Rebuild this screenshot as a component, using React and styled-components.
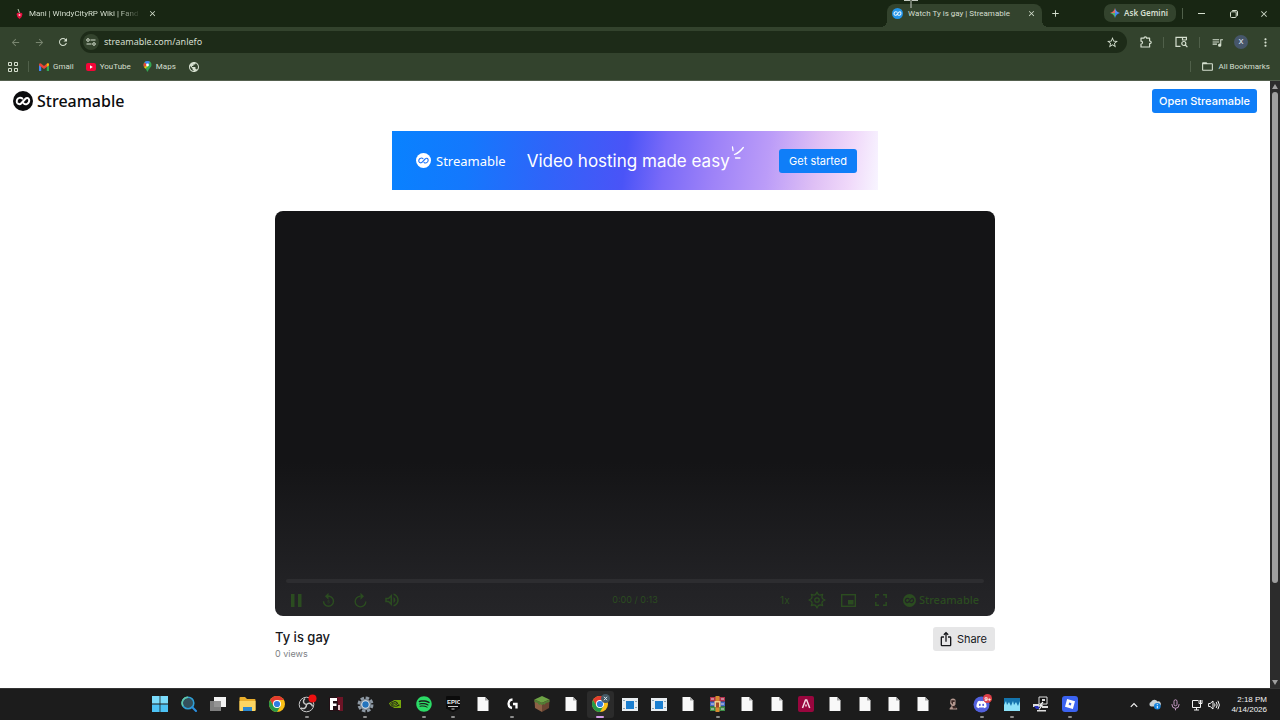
import React from "react";
import styled, { createGlobalStyle, css } from "styled-components";
import {
  MdArrowBack,
  MdArrowForward,
  MdRefresh,
  MdStarBorder,
  MdQueueMusic,
  MdMoreVert,
  MdPublic,
  MdFolderOpen,
  MdClose,
  MdAdd,
  MdReplay5,
  MdOutlineVolumeUp,
  MdIosShare,
} from "react-icons/md";
import { FaDiscord, FaSpotify } from "react-icons/fa";
import { SiNvidia, SiRoblox } from "react-icons/si";

const GlobalStyle = createGlobalStyle`
  *, *::before, *::after { box-sizing: border-box; }
  body { margin: 0; background: #fff; }
  button, input { font: inherit; color: inherit; }
  svg { display: block; flex: none; }
`;

const chromeFont = `Roboto, "Noto Sans", sans-serif`;
const brandFont = `"Noto Sans", "Open Sans", sans-serif`;
const siteFont = `Inter, "Liberation Sans", sans-serif`;

const Screen = styled.div`
  min-height: 100vh;
  display: flex;
  flex-direction: column;
`;

/* ---------- browser chrome ---------- */

const Chrome = styled.header`
  position: relative;
  background: #33432d;
  color: #d5dfcf;
  font-family: ${chromeFont};
  font-size: 8px;
  line-height: 12px;
  border-bottom: 1px solid #53604e;
`;

const TabStrip = styled.div`
  display: flex;
  align-items: stretch;
  height: 27px;
  padding-left: 10px;
  background: #182613;
`;

const Tab = styled.div`
  position: relative;
  display: flex;
  align-items: center;
  gap: 5px;
  width: ${(p) => (p.$active ? 155 : 153)}px;
  height: 23px;
  margin-top: 4px;
  padding: 0 5px 4px;
  border-radius: 8px 8px 0 0;
  ${(p) =>
    p.$active &&
    css`
      background: #33432d;
      &::before,
      &::after {
        content: "";
        position: absolute;
        bottom: 0;
        width: 6px;
        height: 6px;
      }
      &::before {
        right: 100%;
        background: radial-gradient(circle at 0 0, #182613 6px, #33432d 6px);
      }
      &::after {
        left: 100%;
        background: radial-gradient(circle at 100% 0, #182613 6px, #33432d 6px);
      }
    `}
`;

const TabTitle = styled.span`
  flex: 1;
  white-space: nowrap;
  ${(p) =>
    p.$fade &&
    css`
      mask-image: linear-gradient(to right, #000 80%, transparent);
    `}
`;

const IconButton = styled.button`
  display: flex;
  align-items: center;
  justify-content: center;
  flex: none;
  width: ${(p) => p.$w || 12}px;
  height: ${(p) => p.$h || 12}px;
  padding: 0;
  border: 0;
  border-radius: 12px;
  background: ${(p) => p.$bg || "none"};
  color: ${(p) => (p.$dim ? "#78856f" : "inherit")};
`;

const Spacer = styled.div`
  flex: 1;
`;

const TabActions = styled.div`
  display: flex;
  align-items: center;
  padding-left: 7px;
`;

const GeminiButton = styled.button`
  display: flex;
  align-items: center;
  gap: 4px;
  height: 18px;
  margin: 4px 6px 0 43px;
  padding: 0 8px 0 6px;
  border: 0;
  border-radius: 7px;
  background: #33432d;
  font-family: ${brandFont};
  font-weight: 600;
`;

const Divider = styled.span`
  flex: none;
  width: 1px;
  height: 11px;
  background: #50604a;
`;

const WindowControls = styled.div`
  display: flex;
  align-items: center;
`;

const Toolbar = styled.div`
  display: flex;
  align-items: center;
  height: 30px;
  padding: 0 4px 0 3px;
`;

const AddressBar = styled.form`
  flex: 1;
  display: flex;
  align-items: center;
  gap: 5px;
  height: 22px;
  margin: 0 9px 0 5px;
  padding: 0 6px 0 3px;
  border-radius: 11px;
  background: #1d2b18;
`;

const AddressInput = styled.input`
  flex: 1;
  min-width: 0;
  padding: 0;
  border: 0;
  background: none;
  font-family: ${brandFont};
  font-size: 9px;
  outline: none;
`;

const ToolbarIcons = styled.div`
  display: flex;
  align-items: center;
`;

const ToolbarGap = styled.span`
  display: flex;
  justify-content: center;
  width: 14px;
`;

const Avatar = styled.span`
  display: grid;
  place-items: center;
  width: 14px;
  height: 14px;
  border-radius: 50%;
  background: #46566a;
  color: #e4ebf2;
  font-size: 8px;
  line-height: 14px;
`;

const BookmarksBar = styled.nav`
  display: flex;
  align-items: center;
  height: 23px;
  padding: 0 10px 4px 8px;
`;

const BookmarkGroup = styled.div`
  display: flex;
  align-items: center;
  gap: ${(p) => p.$gap}px;
  ${(p) => p.$inset && css`padding-left: 10px;`}
`;

const Bookmark = styled.a`
  display: flex;
  align-items: center;
  gap: 4px;
  color: inherit;
  text-decoration: none;
`;

const Pointer = styled.svg`
  position: absolute;
  top: 0;
  left: 904px;
`;

/* ---------- web page ---------- */

const Viewport = styled.div`
  flex: 1;
  display: flex;
`;

const Page = styled.div`
  flex: 1;
  min-width: 0;
  background: #fff;
  color: #17181c;
  font-family: ${siteFont};
`;

const SiteHeader = styled.div`
  display: flex;
  align-items: center;
  justify-content: space-between;
  height: 40px;
  padding: 0 13px;
`;

const Brand = styled.a`
  display: flex;
  align-items: center;
  gap: ${(p) => p.$gap || 4}px;
  color: ${(p) => p.$color || "#0b0c0e"};
  font-family: ${brandFont};
  font-size: ${(p) => p.$size}px;
  font-weight: ${(p) => p.$weight || 500};
  line-height: 20px;
  text-decoration: none;
`;

const PrimaryButton = styled.button`
  height: 24px;
  padding: 0 ${(p) => p.$pad || 7}px;
  border: 0;
  border-radius: 3px;
  background: #0f7ef8;
  color: #fff;
  font-size: 11px;
  font-weight: ${(p) => p.$weight || 500};
  white-space: nowrap;
`;

const Banner = styled.section`
  display: flex;
  align-items: center;
  width: 486px;
  max-width: 100%;
  height: 59px;
  margin: 10px auto 21px;
  padding: 0 21px 0 24px;
  background: linear-gradient(
    97deg,
    #0882ff 0%,
    #1478fd 16%,
    #2f64f9 32%,
    #4a54f7 48%,
    #7a6af8 56%,
    #9d82f8 66%,
    #bb9cf8 77%,
    #dfc0f5 87%,
    #f0d9fa 94%,
    #f8f5ff 100%
  );
`;

const Slogan = styled.p`
  display: flex;
  align-items: center;
  gap: 1px;
  margin: 0 0 0 21px;
  color: #fff;
  font-size: 17px;
  line-height: 22px;
  white-space: nowrap;
`;

const Sparks = styled.svg`
  margin-bottom: 16px;
`;

const Main = styled.main`
  width: 720px;
  max-width: 100%;
  margin: 0 auto;
`;

const Player = styled.div`
  display: flex;
  flex-direction: column;
  justify-content: flex-end;
  aspect-ratio: 16 / 9;
  padding: 0 11px 1px;
  border-radius: 8px;
  background: linear-gradient(#141416 0%, #141416 62%, #222225 92%, #252528 100%);
  color: #2b4c20;
`;

const Seek = styled.input`
  appearance: none;
  display: block;
  width: 100%;
  height: 4px;
  margin: 0;
  border-radius: 2px;
  background: #2d2d30;
  &::-webkit-slider-thumb {
    appearance: none;
    width: 0;
    height: 0;
  }
`;

const Controls = styled.div`
  display: grid;
  grid-template-columns: 1fr auto 1fr;
  align-items: center;
  height: 30px;
  margin-top: 2px;
`;

const ControlGroup = styled.div`
  display: flex;
  align-items: center;
  justify-content: ${(p) => (p.$end ? "flex-end" : "flex-start")};
  gap: 12px;
  padding-right: ${(p) => (p.$end ? 5 : 0)}px;
`;

const ControlButton = styled(IconButton)`
  width: 20px;
  height: 20px;
  font-size: 10px;
`;

const Time = styled.span`
  font-size: 9px;
  line-height: 12px;
`;

const Details = styled.div`
  display: flex;
  align-items: flex-start;
  justify-content: space-between;
  padding-top: 11px;
`;

const Title = styled.h1`
  margin: 0;
  font-size: 13px;
  font-weight: 500;
  line-height: 20px;
`;

const Views = styled.p`
  margin: 0;
  color: #7d7f84;
  font-size: 9px;
  line-height: 14px;
`;

const ShareButton = styled.button`
  display: flex;
  align-items: center;
  gap: 3px;
  height: 24px;
  padding: 0 8px 0 5px;
  border: 0;
  border-radius: 3px;
  background: #e6e6e7;
  font-size: 11px;
  font-weight: 400;
`;

const Scrollbar = styled.div`
  flex: none;
  display: flex;
  flex-direction: column;
  align-items: center;
  gap: 3px;
  width: 10px;
  padding: 3px 0;
  background: #2c2c2c;
  color: #9f9f9f;
`;

const Track = styled.div`
  flex: 1;
  width: 6px;
`;

const Thumb = styled.div`
  height: 84%;
  border-radius: 3px;
  background: #9f9f9f;
`;

/* ---------- taskbar ---------- */

const Taskbar = styled.footer`
  display: flex;
  height: 32px;
  padding-left: 145px;
  background: #1c1c1c;
  border-top: 1px solid #343434;
  color: #f2f2f2;
`;

const Apps = styled.div`
  flex: 1;
  display: grid;
  grid-auto-flow: column;
  grid-auto-columns: minmax(0, 1fr);
`;

const TaskButton = styled.button`
  position: relative;
  display: grid;
  place-items: center;
  margin: 2px 1px;
  padding: 0 0 1px;
  border: 0;
  border-radius: 3px;
  background: ${(p) => (p.$current ? "#2b2b2b" : "none")};
  &::after {
    content: "";
    position: absolute;
    bottom: 0;
    left: 50%;
    width: ${(p) => (p.$current ? 8 : 4)}px;
    height: 2px;
    border-radius: 1px;
    transform: translateX(-50%);
    background: ${(p) => (p.$current ? "#d29be6" : p.$open ? "#8d8d8d" : "transparent")};
  }
`;

const Tray = styled.div`
  flex: none;
  display: flex;
  align-items: center;
  width: 195px;
  padding-right: 13px;
`;

const TrayIcons = styled.div`
  flex: 1;
  display: grid;
  grid-template-columns: 21px 21px 21px 21px 14px;
  align-items: center;
  justify-items: center;
  justify-content: start;
  padding-left: 38px;
`;

const Clock = styled.time`
  font-family: "Liberation Sans", sans-serif;
  font-size: 8px;
  line-height: 10px;
  text-align: right;
`;

/* ---------- drawings ---------- */

const StreamableMark = ({ size, fill, ink, thin }) => (
  <svg width={size} height={size} viewBox="0 0 20 20" aria-hidden="true">
    <circle cx="10" cy="10" r="10" fill={fill} />
    <path
      d="M9.300 7.600C8.400 6.800 7.300 6.500 6.200 6.900 4.300 7.500 3.300 9.500 3.900 11.300 4.600 13.200 6.900 13.800 8.300 12.300L12.200 8C13.400 6.600 15.300 6.500 16 8.300 16.700 10.200 15.700 12.500 13.800 13.100 12.700 13.500 11.500 13.200 10.700 12.400"
      fill="none"
      stroke={ink}
      strokeWidth={thin ? 1.5 : 2}
      strokeLinecap="round"
      strokeLinejoin="round"
    />
  </svg>
);

const ChromeLogo = ({ badge }) => (
  <svg width="20" height="20" viewBox="0 0 20 20">
    <circle cx="10" cy="10" r="8" fill="#fbc016" />
    <path d="M3.070 6A8 8 0 0 1 16.930 6L10 6 6.500 12Z" fill="#e33b2e" />
    <path d="M3.070 6A8 8 0 0 0 10 18L13.500 12 6.500 12Z" fill="#279847" />
    <circle cx="10" cy="10" r="4" fill="#fff" />
    <circle cx="10" cy="10" r="3.100" fill="#2f7de1" />
    {badge && (
      <g>
        <circle cx="15.500" cy="4.500" r="4.500" fill="#465a66" />
        <path d="M14 2.800 17 6.200M17 2.800 14 6.200" stroke="#dce6ec" strokeWidth="1" />
      </g>
    )}
  </svg>
);

const WindowsLogo = () => (
  <svg width="16" height="16" viewBox="0 0 16 16" fill="#4cc2f4">
    <path d="M0 0h7.600v7.600H0zM8.400 0H16v7.600H8.400z" fill="#7bdcfb" />
    <path d="M0 8.400h7.600V16H0zM8.400 8.400H16V16H8.400z" />
  </svg>
);

const SearchLogo = () => (
  <svg width="16" height="16" viewBox="0 0 16 16" fill="none">
    <circle cx="7" cy="7" r="5.800" fill="#34505c" stroke="#2f9fd6" strokeWidth="1.600" />
    <path d="M2 10A5.800 5.800 0 0 1 7 1.200" stroke="#62c8a8" strokeWidth="1.600" />
    <path d="M11.300 11.300 15 15" stroke="#2a8fe0" strokeWidth="2" strokeLinecap="round" />
  </svg>
);

const TaskViewLogo = () => (
  <svg width="18" height="16" viewBox="0 0 18 16">
    <rect x="5" y="1" width="12" height="10" fill="#f2f2f2" />
    <rect x="1" y="5" width="11" height="10" fill="#8b8b8b" fillOpacity=".9" />
  </svg>
);

const FolderLogo = () => (
  <svg width="17" height="16" viewBox="0 0 17 16">
    <path d="M.5 2A1 1 0 0 1 1.500 1H6l2 2h7.500a1 1 0 0 1 1 1v10a1 1 0 0 1-1 1h-14a1 1 0 0 1-1-1z" fill="#e9ae2c" />
    <path d="M.5 5h16v9a1 1 0 0 1-1 1h-14a1 1 0 0 1-1-1z" fill="#fbd562" />
    <path d="M4 11h9v4H4z" fill="#2a87cf" />
  </svg>
);

const ObsLogo = () => (
  <svg width="20" height="20" viewBox="0 0 20 20" fill="none">
    <circle cx="9.500" cy="10.500" r="7.300" fill="#202022" stroke="#c9c9c9" />
    <path d="M9.500 10.500C6 10 5.500 6.500 8 4.500M9.500 10.500C12 8 15 9.500 15.500 12.500M9.500 10.500C9.500 14 7 15.500 4 14" stroke="#c9c9c9" strokeWidth="1.500" />
    <circle cx="15.500" cy="4.500" r="4" fill="#ee1010" />
  </svg>
);

const FLogo = () => (
  <svg width="16" height="16" viewBox="0 0 16 16">
    <path d="M1 1h14v14H1z" fill="#241016" />
    <path d="M9 1h6v14h-4z" fill="#6d1426" />
    <path d="M2 2h7v3H5v2.500h3.500v2.500H5V14H2z" fill="#fff" />
    <path d="M10 9h2v5h-2z" fill="#e9c4cb" />
  </svg>
);

const GearLogo = () => (
  <svg width="17" height="17" viewBox="0 0 17 17">
    <circle cx="8.500" cy="8.500" r="6.600" fill="none" stroke="#8f9aa5" strokeWidth="2.800" strokeDasharray="3.500 1.680" />
    <circle cx="8.500" cy="8.500" r="5" fill="#dfe5ea" stroke="#7c8792" strokeWidth="1.500" />
    <circle cx="8.500" cy="8.500" r="3.200" fill="#2474bd" />
  </svg>
);

const EpicLogo = () => (
  <svg width="14" height="16" viewBox="0 0 14 16">
    <path d="M0 1a1 1 0 0 1 1-1h12a1 1 0 0 1 1 1v11.500L7 16 0 12.500z" fill="#0b0b0b" />
    <text x="1" y="8" fontSize="6" fontWeight="700" fontFamily="Liberation Sans, sans-serif" fill="#eee">EPIC</text>
    <path d="M2 10.500h10M5.500 13h3" stroke="#ccc" />
  </svg>
);

const FileLogo = () => (
  <svg width="12" height="16" viewBox="0 0 12 16">
    <path d="M.5 1h7.500L11.500 4.500V15H.5z" fill="#f8f8f8" />
    <path d="M8 1v3.500h3.500z" fill="#a9a9a9" />
  </svg>
);

const LogitechLogo = () => (
  <svg width="14" height="14" viewBox="0 0 14 14" fill="none" stroke="#fff" strokeWidth="2.300">
    <path d="M7.500 2.500A4.300 4.300 0 0 0 7 11M8 7h3.500v4.500" />
  </svg>
);

const BlockLogo = () => (
  <svg width="16" height="16" viewBox="0 0 16 16">
    <path d="M8 0 15.500 3.500 8 7 .5 3.500z" fill="#6da345" />
    <path d="M.5 3.500 8 7v9L1 12z" fill="#8d6146" />
    <path d="M15.500 3.500 8 7v9l7-4z" fill="#6a4532" />
    <path d="M.5 3.500 8 7v2L6 8v1L4 8V7L.5 6zM15.500 3.500 8 7v2l2-1v1l2-2 3.500-1z" fill="#527f35" />
  </svg>
);

const WindowLogo = () => (
  <svg width="16" height="13" viewBox="0 0 16 13">
    <path d="M0 0h16v13H0z" fill="#e9eef1" />
    <path d="M1 2h2v1H1zM13 3h2v1h-2zM1 10h2v1H1zM13 9h2v1h-2z" fill="#8ba3b1" />
    <path d="M4 3h8v8H4z" fill="#1b7fd0" />
  </svg>
);

const ArchiveLogo = () => (
  <svg width="17" height="16" viewBox="0 0 17 16">
    <path d="M1 1h15v4.600H1z" fill="#b3324d" />
    <path d="M1 5.600h15v4.800H1z" fill="#4369c6" />
    <path d="M1 10.400h15V15H1z" fill="#3e8f46" />
    <path d="M6.500 0h4v16h-4z" fill="#d68a30" />
    <path d="M5.500 5h6v6h-6z" fill="#f0cf88" />
    <path d="M7 6.500h3v5H7z" fill="#a4482a" />
    <path d="M2 3h3M12 3h3M2 8h3M12 8h3M2 13h3M12 13h3" stroke="#e2d6e0" />
  </svg>
);

const RedALogo = () => (
  <svg width="16" height="16" viewBox="0 0 16 16">
    <rect width="16" height="16" rx="2" fill="#99063e" />
    <path d="M4.500 12 7.500 4h1.200l3 8M8 8.500v2" fill="none" stroke="#f4dbe5" strokeWidth="1.500" />
  </svg>
);

const BustLogo = () => (
  <svg width="10" height="14" viewBox="0 0 12 15">
    <path d="M3 2.500Q6-.5 9 2.500V8L7.500 10 11 13v1H2v-1.500L4.500 10 2.500 7z" fill="#b3978e" />
    <path d="M4 3h4v2H6v3L4 6zM5 10h4l1 3H6z" fill="#3b2724" />
  </svg>
);

const Discord = () => (
  <svg width="20" height="20" viewBox="0 0 20 20">
    <circle cx="9.500" cy="10.500" r="8" fill="#5260dd" />
    <FaDiscord x="4" y="5" size="11" color="#fff" />
    <circle cx="15.500" cy="4.500" r="4.500" fill="#dc3f49" />
    <text x="12.500" y="7" fontSize="6" fontWeight="700" fontFamily="Liberation Sans, sans-serif" fill="#fff">9+</text>
  </svg>
);

const MonitorLogo = () => (
  <svg width="16" height="13" viewBox="0 0 16 13">
    <path d="M0 0h16v13H0z" fill="#1474ad" />
    <path d="M0 13V7l2-4 1 4 2-3 2 4 2-5 1 4 2-3 2 4 2-5v10z" fill="#8ce2f9" />
  </svg>
);

const PuttyLogo = () => (
  <svg width="16" height="16" viewBox="0 0 16 16">
    <path d="M6 1h8v7H6z" fill="#111" stroke="#ddd" />
    <path d="M9 3h3v2H9z" fill="#ddd" />
    <path d="M0 8h6v3H0zM9 10h6v2H9zM4 14h9v1.500H4z" fill="#ddd" />
    <path d="M1 10h5v3H3z" fill="#2630b8" />
    <path d="M10 6 6.500 10l2.500-.5L6 13.500" fill="none" stroke="#f2f2f2" strokeWidth="1.200" />
  </svg>
);

const Roblox = () => (
  <svg width="16" height="16" viewBox="0 0 16 16">
    <rect width="16" height="16" rx="3" fill="#3b63f1" />
    <SiRoblox x="3" y="3" size="10" color="#fff" />
  </svg>
);

const Gmail = () => (
  <svg width="10" height="8" viewBox="0 0 10 8">
    <path d="M0 1.500V8h2.200V3z" fill="#4285f4" />
    <path d="M10 1.500V8H7.800V3z" fill="#34a853" />
    <path d="M0 1.200Q.6-.3 2 .6L5 3 8 .6Q9.400-.3 10 1.200L9.800 2.400 5 6 .2 2.400z" fill="#ea4335" />
    <path d="M7.800.8Q9.400-.3 10 1.200V2.200L7.800 3.800z" fill="#fbbc04" />
  </svg>
);

const YouTube = () => (
  <svg width="10" height="8" viewBox="0 0 10 8">
    <rect width="10" height="8" rx="2" fill="#f50537" />
    <path d="M4 2.300 6.800 4 4 5.700z" fill="#fff" />
  </svg>
);

const MapsPin = () => (
  <svg width="9" height="11" viewBox="0 0 8 11">
    <path d="M4 0a4 4 0 0 1 4 4C8 6.500 5 7.500 4.500 10.500h-1C3 7.500 0 6.500 0 4a4 4 0 0 1 4-4" fill="#34a853" />
    <path d="M4 0A4 4 0 0 0 1 1.400L4 4 6.500.9A4 4 0 0 0 4 0" fill="#4285f4" />
    <path d="M1 1.400A4 4 0 0 0 .5 6L4 4z" fill="#ea4335" />
    <path d="M.5 6 1.800 7.700 5 4z" fill="#fbbc04" />
    <circle cx="4" cy="4" r="1.400" fill="#fff" />
  </svg>
);

const Sparkle = () => (
  <svg width="10" height="10" viewBox="0 0 10 10">
    <path d="M5 0Q6 4 10 5H5z" fill="#5d8df4" />
    <path d="M5 0Q4 4 0 5h5z" fill="#e56b5d" />
    <path d="M0 5q4 1 5 5V5z" fill="#58b56c" />
    <path d="M10 5Q6 6 5 10V5z" fill="#3d86f5" />
  </svg>
);

const Cherry = () => (
  <svg width="9" height="10" viewBox="0 0 9 10">
    <path d="M3 0 4.500 4" stroke="#b9cbb0" />
    <path d="M1.500 5Q2.500 3 4.500 4 6.500 3 7.500 5 7.500 7.500 4.500 10 1.500 7.500 1.500 5" fill="#e51240" />
    <circle cx="4.500" cy="6" r="1" fill="#ffc4cf" />
  </svg>
);

const Grid4 = () => (
  <svg width="10" height="10" viewBox="0 0 10 10" fill="none" stroke="currentColor">
    <path d="M.5.500h3v3h-3zM6.500.500h3v3h-3zM.5 6.500h3v3h-3zM6.500 6.500h3v3h-3z" />
  </svg>
);

const SiteInfo = () => (
  <svg width="10" height="8" viewBox="0 0 10 8" fill="none" stroke="currentColor">
    <path d="M4.500 2H9.500M.5 6H5.500" />
    <circle cx="2" cy="2" r="1.300" />
    <circle cx="8" cy="6" r="1.300" />
  </svg>
);

const Puzzle = () => (
  <svg width="12" height="12" viewBox="0 0 12 12" fill="none" stroke="currentColor" strokeWidth="1.200" strokeLinejoin="round">
    <path d="M1 2.200H4Q4 .8 5.300.8T6.600 2.200H9.600V5Q11.200 5 11.200 6.300T9.600 7.600V11H1V8Q2.500 8 2.500 6.600T1 5.200Z" />
  </svg>
);

const LensSearch = () => (
  <svg width="13" height="12" viewBox="0 0 13 12" fill="none" stroke="currentColor" strokeWidth="1.200">
    <path d="M5.500 10.400H1V1.400H11.400V4M7.500 1.400V4H11.500" />
    <circle cx="8.800" cy="7.500" r="2" />
    <path d="M10.300 9 12.400 11.200" />
  </svg>
);

const Restore = () => (
  <svg width="8" height="8" viewBox="0 0 8 8" fill="none" stroke="currentColor">
    <rect x=".5" y="1.800" width="5.700" height="5.700" rx="1" />
    <path d="M2.200.5H6A1.500 1.500 0 0 1 7.500 2v3.800" />
  </svg>
);

const Minimise = () => (
  <svg width="7" height="2" viewBox="0 0 7 2">
    <path d="M0 .5h7" stroke="currentColor" />
  </svg>
);

const PauseBars = () => (
  <svg width="12" height="13" viewBox="0 0 12 13" fill="currentColor">
    <path d="M1 0h3.500v13H1zM8 0h3.500v13H8z" />
  </svg>
);

/* Eight pointed teeth round a small hub. */
const gearPoints = Array.from({ length: 32 }, (_, i) => {
  const radius = [8, 5.8, 5.6, 5.8][i % 4];
  const angle = ((i % 4 === 1 ? i + 0.1 : i % 4 === 3 ? i - 0.1 : i) * Math.PI) / 16;
  return `${(9 + radius * Math.sin(angle)).toFixed(2)},${(9 - radius * Math.cos(angle)).toFixed(2)}`;
}).join(" ");

const SpikyGear = () => (
  <svg width="18" height="18" viewBox="0 0 18 18" fill="none" stroke="currentColor" strokeWidth="1.300" strokeLinejoin="round">
    <polygon points={gearPoints} />
    <circle cx="9" cy="9" r="2.200" />
  </svg>
);

const MiniPlayer = () => (
  <svg width="15" height="13" viewBox="0 0 15 13" fill="none" stroke="currentColor" strokeWidth="1.400">
    <rect x=".7" y=".7" width="13.600" height="11.600" />
    <rect x="7" y="6" width="5.500" height="4.500" fill="currentColor" stroke="none" />
  </svg>
);

const Corners = () => (
  <svg width="12" height="12" viewBox="0 0 12 12" fill="none" stroke="currentColor" strokeWidth="1.500">
    <path d="M.8 4V.8H4M8 .8h3.200V4M11.200 8v3.200H8M4 11.200H.8V8" />
  </svg>
);

const Forward = () => (
  <svg width="17" height="17" viewBox="0 0 24 24" fill="none" stroke="currentColor" strokeWidth="2">
    <path d="M12 6a7.500 7.500 0 1 0 7.500 7.500" />
    <path d="M12 1 17 6l-5 5z" fill="currentColor" stroke="none" />
  </svg>
);

const Triangle = ({ down }) => (
  <svg width="6" height="5" viewBox="0 0 6 5" fill="currentColor">
    <path d={down ? "M0 0h6L3 5z" : "M0 5h6L3 0z"} />
  </svg>
);

const Chevron = () => (
  <svg width="8" height="6" viewBox="0 0 8 6" fill="none" stroke="currentColor" strokeWidth="1.200">
    <path d="M.8 4.800 4 1.500l3.200 3.300" />
  </svg>
);

const Cloud = () => (
  <svg width="12" height="11" viewBox="0 0 12 11">
    <path d="M2 7.500A2.400 2.400 0 0 1 2 3 3.600 3.600 0 0 1 8.500 2.500 2.500 2.500 0 0 1 10 7.500z" fill="#c9d1d6" />
    <circle cx="8.300" cy="7.300" r="3.300" fill="#1684df" />
    <path d="M8.300 5.200v1M8.300 7v2.300" stroke="#fff" />
  </svg>
);

const Mic = () => (
  <svg width="9" height="12" viewBox="0 0 9 12" fill="none" stroke="#c69ac4">
    <rect x="3" y=".8" width="3" height="6" rx="1.500" />
    <path d="M1 5v.8a3.500 3.500 0 0 0 7 0V5M4.500 9.300v2" />
  </svg>
);

const Network = () => (
  <svg width="12" height="12" viewBox="0 0 12 12" fill="none" stroke="currentColor">
    <path d="M7 1.500H1.500v7h8V6M3 11h5M5.500 8.500V11M9.500 4.500V6" />
    <path d="M8 1v3.500h3V1M9.500 1v3" />
  </svg>
);

const Speaker = () => (
  <svg width="12" height="10" viewBox="0 0 12 10" fill="none" stroke="currentColor">
    <path d="M.6 3.500h1.600L5 1v8L2.200 6.500H.6z" />
    <path d="M6.500 3.500q1 1.500 0 3M8.200 2q2 3 0 6M9.900.8q3 4.200 0 8.400" />
  </svg>
);

const apps = [
  { name: "Start", icon: <WindowsLogo /> },
  { name: "Search", icon: <SearchLogo /> },
  { name: "Task view", icon: <TaskViewLogo /> },
  { name: "File Explorer", icon: <FolderLogo /> },
  { name: "Chrome", icon: <ChromeLogo /> },
  { name: "OBS Studio", icon: <ObsLogo />, open: true },
  { name: "FiveM", icon: <FLogo /> },
  { name: "Settings", icon: <GearLogo />, open: true },
  { name: "Nvidia", icon: <SiNvidia size={12} color="#76a80c" /> },
  { name: "Spotify", icon: <FaSpotify size={16} color="#2bdb66" />, open: true },
  { name: "Epic Games", icon: <EpicLogo />, open: true },
  { name: "File 1", icon: <FileLogo /> },
  { name: "G Hub", icon: <LogitechLogo />, open: true },
  { name: "Minecraft", icon: <BlockLogo /> },
  { name: "File 2", icon: <FileLogo /> },
  { name: "Chrome profile X", icon: <ChromeLogo badge />, current: true },
  { name: "Window 1", icon: <WindowLogo /> },
  { name: "Window 2", icon: <WindowLogo /> },
  { name: "File 3", icon: <FileLogo /> },
  { name: "WinRAR", icon: <ArchiveLogo />, open: true },
  { name: "File 4", icon: <FileLogo /> },
  { name: "File 5", icon: <FileLogo /> },
  { name: "A", icon: <RedALogo /> },
  { name: "File 6", icon: <FileLogo /> },
  { name: "File 7", icon: <FileLogo /> },
  { name: "File 8", icon: <FileLogo /> },
  { name: "File 9", icon: <FileLogo /> },
  { name: "Game", icon: <BustLogo /> },
  { name: "Discord", icon: <Discord />, open: true },
  { name: "Monitor", icon: <MonitorLogo />, open: true },
  { name: "Terminal", icon: <PuttyLogo /> },
  { name: "Roblox", icon: <Roblox />, open: true },
];

export default function App() {
  return (
    <Screen>
      <GlobalStyle />
      <Chrome>
        <TabStrip>
          <Tab>
            <Cherry />
            <TabTitle $fade>Mani | WindyCityRP Wiki | Fand</TabTitle>
            <IconButton aria-label="Close tab"><MdClose size={9} /></IconButton>
          </Tab>
          <Spacer />
          <Tab $active>
            <StreamableMark size={11} fill="#2394e8" ink="#e4f4ff" />
            <TabTitle>Watch Ty is gay | Streamable</TabTitle>
            <IconButton aria-label="Close tab"><MdClose size={9} /></IconButton>
          </Tab>
          <TabActions>
            <IconButton aria-label="New tab"><MdAdd size={11} /></IconButton>
          </TabActions>
          <GeminiButton><Sparkle />Ask Gemini</GeminiButton>
          <WindowControls>
            <Divider />
            <IconButton $w={37} aria-label="Minimize"><Minimise /></IconButton>
            <IconButton $w={28} aria-label="Restore"><Restore /></IconButton>
            <IconButton $w={32} aria-label="Close"><MdClose size={10} /></IconButton>
          </WindowControls>
        </TabStrip>
        <Toolbar>
          <IconButton $w={24} $dim aria-label="Back"><MdArrowBack size={11} /></IconButton>
          <IconButton $w={24} $dim aria-label="Forward"><MdArrowForward size={11} /></IconButton>
          <IconButton $w={24} aria-label="Reload"><MdRefresh size={12} /></IconButton>
          <AddressBar onSubmit={(e) => e.preventDefault()}>
            <IconButton type="button" $w={16} $h={16} $bg="#33432d" aria-label="Site information"><SiteInfo /></IconButton>
            <AddressInput aria-label="Address" defaultValue="streamable.com/anlefo" />
            <IconButton type="button" $w={18} aria-label="Bookmark this page"><MdStarBorder size={13} /></IconButton>
          </AddressBar>
          <ToolbarIcons>
            <IconButton $w={20} aria-label="Extensions"><Puzzle /></IconButton>
            <ToolbarGap><Divider /></ToolbarGap>
            <IconButton $w={22} aria-label="Search this page"><LensSearch /></IconButton>
            <ToolbarGap><Divider /></ToolbarGap>
            <IconButton $w={22} aria-label="Media"><MdQueueMusic size={13} /></IconButton>
            <IconButton $w={26} $h={14} aria-label="Profile"><Avatar>X</Avatar></IconButton>
            <IconButton $w={22} aria-label="Menu"><MdMoreVert size={13} /></IconButton>
          </ToolbarIcons>
        </Toolbar>
        <BookmarksBar>
          <BookmarkGroup $gap={10}>
            <Bookmark href="#apps" aria-label="Apps"><Grid4 /></Bookmark>
            <Divider />
          </BookmarkGroup>
          <BookmarkGroup $gap={12} $inset>
            <Bookmark href="#gmail"><Gmail />Gmail</Bookmark>
            <Bookmark href="#youtube"><YouTube />YouTube</Bookmark>
            <Bookmark href="#maps"><MapsPin />Maps</Bookmark>
            <Bookmark href="#web" aria-label="Web"><MdPublic size={12} /></Bookmark>
          </BookmarkGroup>
          <Spacer />
          <BookmarkGroup $gap={10}>
            <Divider />
            <Bookmark href="#all"><MdFolderOpen size={13} />All Bookmarks</Bookmark>
          </BookmarkGroup>
        </BookmarksBar>
        <Pointer width="14" height="8" viewBox="0 0 14 8" fill="none" stroke="#c5cbc2" aria-hidden="true">
          <path d="M0 .5H6M8 .5H14M7 0V8" />
        </Pointer>
      </Chrome>

      <Viewport>
        <Page>
          <SiteHeader>
            <Brand href="#home" $size={16}>
              <StreamableMark size={20} fill="#0b0c0e" ink="#fff" />
              Streamable
            </Brand>
            <PrimaryButton>Open Streamable</PrimaryButton>
          </SiteHeader>
          <Banner>
            <Brand href="#about" $size={13} $weight={400} $gap={5} $color="#fff">
              <StreamableMark size={15} fill="#fff" ink="#1b74fb" thin />
              Streamable
            </Brand>
            <Slogan>
              Video hosting made easy
              <Sparks width="13" height="13" viewBox="0 0 13 13" fill="none" stroke="#fff" strokeWidth="1.300" strokeLinecap="round" aria-hidden="true">
                <path d="M1.500 1 2 4.500M12.300 1.500Q8 7 3.500 8.500M4.500 12H9" />
              </Sparks>
            </Slogan>
            <Spacer />
            <PrimaryButton $pad={10} $weight={400}>Get started</PrimaryButton>
          </Banner>
          <Main>
            <Player>
              <Seek type="range" min="0" max="13" defaultValue="0" aria-label="Seek" />
              <Controls>
                <ControlGroup>
                  <ControlButton aria-label="Pause"><PauseBars /></ControlButton>
                  <ControlButton aria-label="Back 5 seconds"><MdReplay5 size={17} /></ControlButton>
                  <ControlButton aria-label="Forward 5 seconds"><Forward /></ControlButton>
                  <ControlButton aria-label="Volume"><MdOutlineVolumeUp size={18} /></ControlButton>
                </ControlGroup>
                <Time>0:00 / 0:13</Time>
                <ControlGroup $end>
                  <ControlButton aria-label="Playback speed">1x</ControlButton>
                  <ControlButton aria-label="Settings"><SpikyGear /></ControlButton>
                  <ControlButton aria-label="Picture in picture"><MiniPlayer /></ControlButton>
                  <ControlButton aria-label="Full screen"><Corners /></ControlButton>
                  <Brand href="#watch" $size={11} $gap={3} $color="#2b4c20">
                    <StreamableMark size={13} fill="#2b4c20" ink="#242427" />
                    Streamable
                  </Brand>
                </ControlGroup>
              </Controls>
            </Player>
            <Details>
              <div>
                <Title>Ty is gay</Title>
                <Views>0 views</Views>
              </div>
              <ShareButton><MdIosShare size={16} />Share</ShareButton>
            </Details>
          </Main>
        </Page>
        <Scrollbar aria-hidden="true">
          <Triangle />
          <Track><Thumb /></Track>
          <Triangle down />
        </Scrollbar>
      </Viewport>

      <Taskbar>
        <Apps>
          {apps.map((a) => (
            <TaskButton key={a.name} aria-label={a.name} $open={a.open} $current={a.current}>
              {a.icon}
            </TaskButton>
          ))}
        </Apps>
        <Tray>
          <TrayIcons>
            <Chevron />
            <Cloud />
            <Mic />
            <Network />
            <Speaker />
          </TrayIcons>
          <Clock>
            2:18 PM<br />4/14/2026
          </Clock>
        </Tray>
      </Taskbar>
    </Screen>
  );
}
